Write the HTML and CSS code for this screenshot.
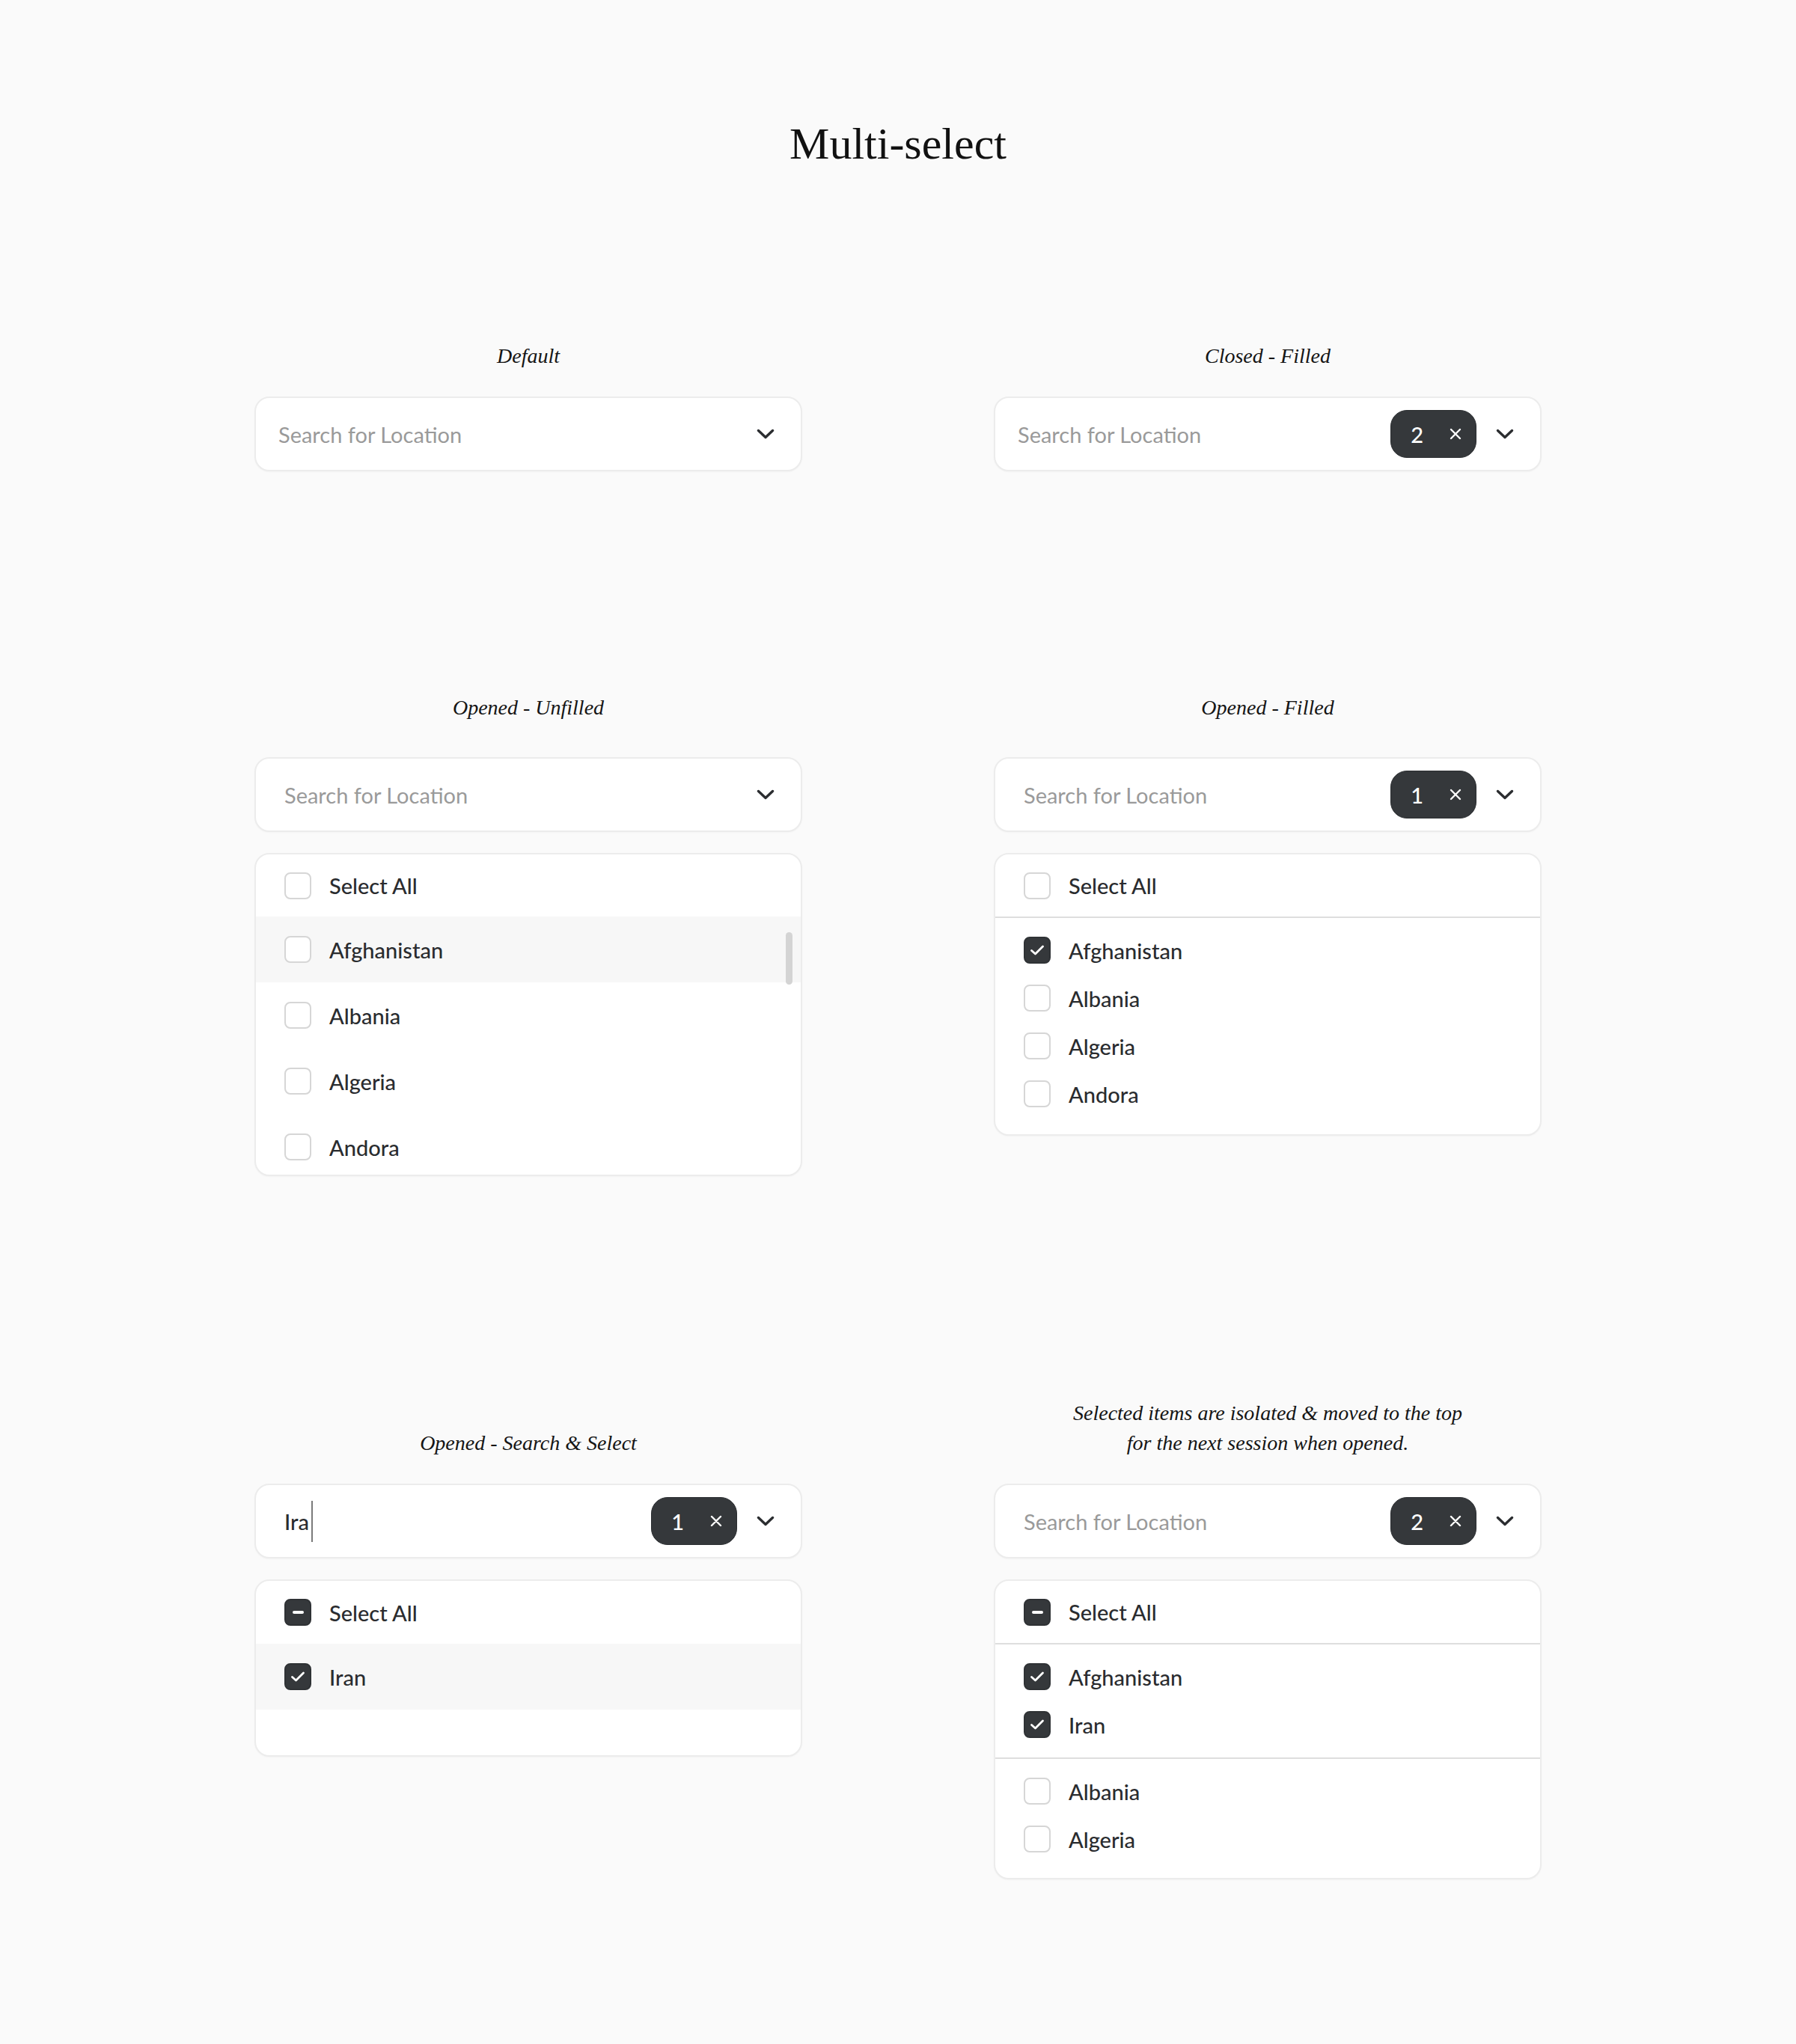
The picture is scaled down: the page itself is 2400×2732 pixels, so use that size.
FILE: index.html
```html
<!DOCTYPE html>
<html lang="en">
<head>
<meta charset="utf-8">
<title>Multi-select</title>
<link rel="stylesheet" href="styles.css">
</head>
<body>
<main class="page">
  <h1 class="title">Multi-select</h1>

  <section class="row row-first">
    <p class="label">Default</p>
    <p class="label">Closed - Filled</p>

    <div class="field">
      <span class="placeholder">Search for Location</span>
      <svg class="chev" viewBox="0 0 24 14"><path d="M2.5 2.5 L12 11.5 L21.5 2.5"/></svg>
    </div>

    <div class="field">
      <span class="placeholder">Search for Location</span>
      <span class="badge">2<svg class="x" viewBox="0 0 16 16"><path d="M2 2 L14 14 M14 2 L2 14"/></svg></span>
      <svg class="chev" viewBox="0 0 24 14"><path d="M2.5 2.5 L12 11.5 L21.5 2.5"/></svg>
    </div>
  </section>

  <section class="row row-second">
    <p class="label">Opened - Unfilled</p>
    <p class="label">Opened - Filled</p>

    <div class="cell">
      <div class="field open">
        <span class="placeholder">Search for Location</span>
        <svg class="chev" viewBox="0 0 24 14"><path d="M2.5 2.5 L12 11.5 L21.5 2.5"/></svg>
      </div>
      <div class="list scroll">
        <div class="opt head"><span class="box"></span>Select All</div>
        <div class="opt hover"><span class="box"></span>Afghanistan</div>
        <div class="opt"><span class="box"></span>Albania</div>
        <div class="opt"><span class="box"></span>Algeria</div>
        <div class="opt"><span class="box"></span>Andora</div>
        <span class="thumb"></span>
      </div>
    </div>

    <div class="cell">
      <div class="field open">
        <span class="placeholder">Search for Location</span>
        <span class="badge">1<svg class="x" viewBox="0 0 16 16"><path d="M2 2 L14 14 M14 2 L2 14"/></svg></span>
        <svg class="chev" viewBox="0 0 24 14"><path d="M2.5 2.5 L12 11.5 L21.5 2.5"/></svg>
      </div>
      <div class="list">
        <div class="opt head divided"><span class="box"></span>Select All</div>
        <div class="group last">
          <div class="opt compact"><span class="box on"><svg class="check" viewBox="0 0 20 16"><path d="M2.5 8.5 L7.5 13 L17.5 3"/></svg></span>Afghanistan</div>
          <div class="opt compact"><span class="box"></span>Albania</div>
          <div class="opt compact"><span class="box"></span>Algeria</div>
          <div class="opt compact"><span class="box"></span>Andora</div>
        </div>
      </div>
    </div>
  </section>

  <section class="row row-third">
    <p class="label">Opened - Search &amp; Select</p>
    <p class="label">Selected items are isolated &amp; moved to the top<br>for the next session when opened.</p>

    <div class="cell">
      <div class="field open">
        <span class="typed">Ira<span class="caret"></span></span>
        <span class="badge">1<svg class="x" viewBox="0 0 16 16"><path d="M2 2 L14 14 M14 2 L2 14"/></svg></span>
        <svg class="chev" viewBox="0 0 24 14"><path d="M2.5 2.5 L12 11.5 L21.5 2.5"/></svg>
      </div>
      <div class="list">
        <div class="opt head tall"><span class="box on"><span class="minus"></span></span>Select All</div>
        <div class="opt hover"><span class="box on"><svg class="check" viewBox="0 0 20 16"><path d="M2.5 8.5 L7.5 13 L17.5 3"/></svg></span>Iran</div>
        <div class="filler"></div>
      </div>
    </div>

    <div class="cell">
      <div class="field open">
        <span class="placeholder">Search for Location</span>
        <span class="badge">2<svg class="x" viewBox="0 0 16 16"><path d="M2 2 L14 14 M14 2 L2 14"/></svg></span>
        <svg class="chev" viewBox="0 0 24 14"><path d="M2.5 2.5 L12 11.5 L21.5 2.5"/></svg>
      </div>
      <div class="list">
        <div class="opt head divided"><span class="box on"><span class="minus"></span></span>Select All</div>
        <div class="group divided">
          <div class="opt compact"><span class="box on"><svg class="check" viewBox="0 0 20 16"><path d="M2.5 8.5 L7.5 13 L17.5 3"/></svg></span>Afghanistan</div>
          <div class="opt compact"><span class="box on"><svg class="check" viewBox="0 0 20 16"><path d="M2.5 8.5 L7.5 13 L17.5 3"/></svg></span>Iran</div>
        </div>
        <div class="group last short">
          <div class="opt compact"><span class="box"></span>Albania</div>
          <div class="opt compact"><span class="box"></span>Algeria</div>
        </div>
      </div>
    </div>
  </section>
</main>
</body>
</html>
```

FILE: styles.css
```css
* { box-sizing: border-box; }

html, body {
  margin: 0;
  padding: 0;
  background: #fafafa;
}

body {
  font-family: "Lato", "Noto Sans", sans-serif;
  color: #2a2c2f;
  min-height: 2732px;
}

.page {
  width: 1720px;
  margin: 0 auto;
  padding-top: 156px;
}

.title {
  margin: 0;
  text-align: center;
  font-family: "Liberation Serif", serif;
  font-weight: 400;
  font-size: 60px;
  line-height: 72px;
  color: #111;
}

.row {
  display: grid;
  grid-template-columns: 732px 732px;
  column-gap: 256px;
  row-gap: 34px;
  align-items: start;
  margin-top: 296px;
}

.row-first { margin-top: 228px; }
.row-second { row-gap: 46px; }
.row-third { margin-top: 297px; }

.label {
  margin: 0;
  align-self: end;
  text-align: center;
  font-family: "Liberation Serif", serif;
  font-style: italic;
  font-size: 28px;
  line-height: 40px;
  color: #151515;
}

.field {
  height: 100px;
  background: #fff;
  border: 2px solid #ececec;
  border-radius: 20px;
  box-shadow: 0 1px 2px rgba(0, 0, 0, 0.03);
  display: flex;
  align-items: center;
  padding: 0 35px 0 30px;
}

.field.open { padding-left: 38px; }

.placeholder {
  flex: 1;
  font-size: 29px;
  font-weight: 400;
  color: #9a9a9a;
}

.typed {
  flex: 1;
  display: flex;
  align-items: center;
  font-size: 29px;
  font-weight: 500;
  color: #2a2c2f;
}

.caret {
  display: inline-block;
  width: 2px;
  height: 55px;
  margin-left: 3px;
  background: #7a7a7a;
}

.chev {
  width: 24px;
  height: 14px;
  flex: none;
}

.chev path {
  fill: none;
  stroke: #2b2d30;
  stroke-width: 3.4;
  stroke-linecap: round;
  stroke-linejoin: round;
}

.badge {
  flex: none;
  height: 64px;
  display: flex;
  align-items: center;
  gap: 35px;
  padding: 0 19px 0 26px;
  margin-right: 26px;
  background: #35383b;
  border: 1px solid #2b2e31;
  border-radius: 22px;
  color: #fff;
  font-size: 29px;
  font-weight: 500;
}

.x {
  width: 16px;
  height: 16px;
}

.x path {
  fill: none;
  stroke: #fff;
  stroke-width: 2.4;
  stroke-linecap: round;
}

.list {
  position: relative;
  margin-top: 28px;
  background: #fff;
  border: 2px solid #ececec;
  border-radius: 20px;
  box-shadow: 0 1px 2px rgba(0, 0, 0, 0.03);
  overflow: hidden;
}

.list.scroll { height: 432px; }

.opt {
  display: flex;
  align-items: center;
  gap: 24px;
  height: 88px;
  padding-left: 38px;
  font-size: 29px;
  font-weight: 500;
  color: #2a2c2f;
}

.opt.head { height: 83px; }
.opt.head.divided { height: 85px; }
.opt.head.tall { height: 84px; }
.opt.compact { height: 64px; }
.opt.hover { background: #f7f7f7; }

.divided { border-bottom: 2px solid #dedede; }

.group { padding: 11px 0 12px; }
.group.last { padding-bottom: 22px; }
.group.last.short { padding-bottom: 20px; }

.filler { height: 61px; }

.box {
  flex: none;
  width: 36px;
  height: 36px;
  border: 2.5px solid #d6d6d6;
  border-radius: 8px;
  background: #fff;
  display: flex;
  align-items: center;
  justify-content: center;
}

.box.on {
  background: #35383b;
  border-color: #2f3235;
}

.check {
  width: 20px;
  height: 16px;
}

.check path {
  fill: none;
  stroke: #fff;
  stroke-width: 2.8;
  stroke-linecap: round;
  stroke-linejoin: round;
}

.minus {
  width: 15px;
  height: 4px;
  border-radius: 2px;
  background: #fff;
}

.thumb {
  position: absolute;
  right: 11px;
  top: 104px;
  width: 9px;
  height: 70px;
  border-radius: 5px;
  background: #d4d4d4;
}
```
